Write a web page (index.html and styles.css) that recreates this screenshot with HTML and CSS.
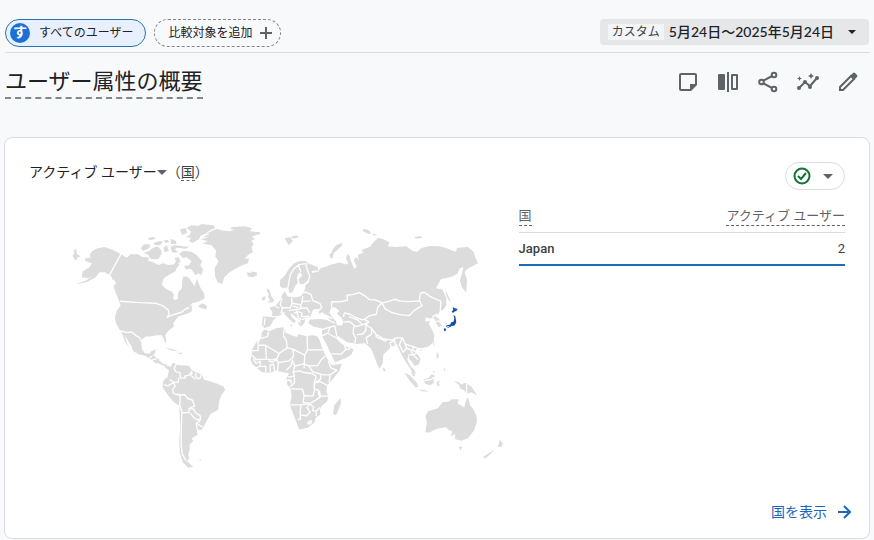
FILE: index.html
```html
<!DOCTYPE html>
<html lang="ja">
<head>
<meta charset="utf-8">
<meta name="viewport" content="width=device-width, initial-scale=1">
<title>ユーザー属性の概要</title>
<link rel="stylesheet" href="styles.css">
</head>
<body>
<header class="topbar">
  <div class="chips">
    <button class="chip chip-selected" type="button"><span class="badge">す</span>すべてのユーザー</button>
    <button class="chip chip-add" type="button">比較対象を追加
      <svg width="14" height="14" viewBox="0 0 14 14" aria-hidden="true"><path d="M7 1v12M1 7h12" stroke="#5f6368" stroke-width="2"/></svg>
    </button>
  </div>
  <button class="date" type="button"><span class="date-tag">カスタム</span><span class="date-range">5月24日～2025年5月24日</span><span class="caret"></span></button>
</header>
<main>
  <div class="title-row">
    <h1>ユーザー属性の概要</h1>
    <div class="tools">
      <button type="button" aria-label="メモ"><svg viewBox="0 0 24 24"><path fill-rule="evenodd" d="M5 3h14a2 2 0 0 1 2 2v10l-6 6H5a2 2 0 0 1-2-2V5a2 2 0 0 1 2-2zm0 2v14h9v-5h5V5z"/></svg></button>
      <button type="button" aria-label="比較"><svg viewBox="0 0 24 24"><path fill-rule="evenodd" d="M3 4h5a1 1 0 0 1 1 1v14a1 1 0 0 1-1 1H3a1 1 0 0 1-1-1V5a1 1 0 0 1 1-1zM11 2h2v20h-2zM16 4h5a1 1 0 0 1 1 1v14a1 1 0 0 1-1 1h-5a1 1 0 0 1-1-1V5a1 1 0 0 1 1-1zm1 2v12h3V6z"/></svg></button>
      <button type="button" aria-label="共有"><svg viewBox="0 0 24 24"><path d="M18 5L5 12l13 7" fill="none" stroke="#5f6368" stroke-width="2"/><g fill="#f8f9fb" stroke="#5f6368" stroke-width="2"><circle cx="18" cy="5" r="2.3"/><circle cx="5.500" cy="12" r="2.300"/><circle cx="18" cy="19" r="2.300"/></g></svg></button>
      <button type="button" aria-label="分析情報"><svg viewBox="0 0 24 24"><path d="M3 18l6-6 5 4 7-8" fill="none" stroke="#5f6368" stroke-width="2"/><circle cx="3" cy="18" r="2"/><circle cx="9" cy="12" r="2"/><circle cx="14" cy="17" r="2"/><circle cx="21" cy="8" r="2"/><path d="M15 3l1 2 2 1-2 1-1 2-1-2-2-1 2-1zM3.500 6l.7 1.800 1.800.7-1.800.7-.7 1.800-.7-1.800L1 8.500l1.800-.7z"/></svg></button>
      <button type="button" aria-label="編集"><svg viewBox="0 0 24 24"><path d="M4 20v-3L15 6l3 3L7 20z" fill="none" stroke="#5f6368" stroke-width="2"/><path d="M14 6l3-3q1-1 2 0l2 2q1 1 0 2l-3 3z"/></svg></button>
    </div>
  </div>
  <section class="card">
    <div class="card-head">
      <h2><button class="metric" type="button">アクティブ ユーザー<span class="caret caret-grey"></span></button><span class="dimension">（<span class="dotted">国</span>）</span></h2>
      <button class="status" type="button" aria-label="データの品質">
        <svg width="20" height="20" viewBox="0 0 20 20"><g fill="none" stroke="#137333" stroke-width="2"><circle cx="10" cy="10" r="7.500"/><path d="M6 10l3 3 5-6"/></g></svg>
        <span class="caret caret-grey"></span>
      </button>
    </div>
    <div class="content">
      <svg class="map" viewBox="0 0 1380 780" role="img" aria-label="国別のアクティブ ユーザー">
        <g class="land">
          <g transform="translate(15 0)">
            <path d="M75 130L92 128 90 118 97 108 112 100 133 96 160 105 182 117 200 128 212 118 235 118 245 125 268 128 264 137 280 142 295 150 310 145 325 150 342 149 350 136 358 150 350 160 346 170 330 178 312 190 305 208 318 222 335 230 342 238 340 252 348 256 354 250 355 232 366 220 367 200 370 184 385 186 395 200 403 213 412 192 420 215 432 235 435 250 418 260 398 264 385 278 378 284 395 279 398 285 385 295 370 300 355 305 345 318 340 325 342 335 325 348 316 360 319 375 317 387 311 370 305 360 285 362 270 365 258 365 247 372 244 388 247 405 255 415 268 417 275 408 288 404 283 418 275 423 280 430 298 432 297 446 285 442 268 430 255 423 235 418 220 408 215 395 200 370 190 352 180 345 168 325 165 308 170 288 182 272 176 255 168 235 161 215 168 205 160 188 148 181 135 172 120 172 105 182 85 190 65 187 68 170 88 157 96 145 76 138zM184 350L193 354 200 382 208 398 196 382zM38 122L43 115 41 105 49 103 51 118 62 124 52 128 50 135 44 134zM47 207L75 198 98 185 118 173 106 188 78 203zM155 182L163 185 162 197 157 193zM414 274L428 265 433 267 442 274 438 284 424 279zM388 275L396 271 395 290 387 294zM242 100L252 88 270 88 269 99 250 108zM252 113L268 108 278 99 292 94 304 105 305 117 295 133 272 132 266 121zM358 116L370 107 395 110 410 120 427 140 421 152 430 162 425 180 415 175 407 181 393 161 378 164 373 154 388 150 395 138 380 127 368 129zM311 98L321 90 327 107 314 112zM331 97L342 91 350 98 345 104 356 111 338 113zM263 70L280 65 287 72 269 76zM282 83L300 78 309 80 301 91 283 90zM310 77L323 74 328 81 318 84zM332 71L348 78 350 87 333 86zM342 90L367 94 388 95 377 101 350 98zM360 43L378 39 382 53 367 60zM344 130L356 126 362 140 352 148zM313 398L337 402 354 409 341 408 321 401zM350 414L368 413 364 418z"/>
          </g>
          <g transform="translate(285 0)">
            <path d="M110 39L124 31 145 33 155 27 190 31 196 39 180 46 170 54 153 62 147 73 129 83 117 78 124 68 107 67 120 60 123 49zM153 73L180 65 158 67 180 56 171 55 200 42 222 47 240 49 253 44 240 41 248 36 285 34 307 40 300 48 312 50 330 51 331 58 318 60 306 65 315 72 304 78 312 87 305 96 309 112 295 119 284 132 298 130 294 145 272 153 252 164 235 176 223 188 217 207 203 202 196 185 194 160 206 140 196 124 199 107 185 91 158 86 173 79zM291 172L302 174 307 170 321 172 321 181 308 187 294 184zM404 70L420 67 430 77 417 91 411 81zM422 66L440 61 448 67 430 71zM0 421L13 423 24 436 20 447 10 440z"/>
          </g>
          <g transform="translate(555 15)">
            <path d="M121 180L136 166 148 146 162 131 180 123 198 123 207 131 235 142 235 152 215 153 218 159 235 155 242 145 259 140 280 132 300 128 319 134 326 130 319 117 323 102 330 108 334 124 344 147 351 140 342 120 350 110 357 121 354 104 372 98 365 90 391 80 399 69 416 53 435 59 450 68 444 79 468 81 500 79 518 92 532 96 545 84 569 78 599 79 622 85 639 92 649 95 652 83 685 81 702 96 707 112 715 130 698 139 687 144 675 156 682 180 680 218 666 201 661 181 668 158 671 141 660 146 654 160 646 166 630 172 604 178 589 205 608 209 620 233 620 255 610 271 601 270 596 284 586 290 599 297 599 307 606 316 597 323 590 310 582 293 571 296 559 292 556 305 572 303 567 312 575 325 584 345 582 366 567 380 545 385 534 383 526 396 535 405 543 418 537 433 525 439 518 427 509 418 506 404 503 420 512 438 523 449 530 463 517 454 499 427 488 409 481 395 471 373 458 367 451 384 431 404 429 430 419 447 411 430 399 397 393 386 376 370 354 372 322 367 306 356 291 346 291 358 308 373 325 383 341 388 336 403 322 413 286 427 273 402 262 377 247 349 247 326 220 320 205 309 212 299 243 297 272 302 260 287 247 277 236 282 240 268 226 267 219 271 212 290 197 294 195 307 185 320 181 301 166 290 151 278 156 292 169 303 162 310 146 295 132 281 116 288 101 300 91 319 73 324 66 314 69 290 96 291 98 276 88 263 105 259 114 250 123 238 127 224 135 214 144 230 163 233 183 229 193 214 198 195 208 186 206 181 190 193 180 192 177 178 188 166 181 156 174 163 171 176 175 188 166 198 158 216 149 221 145 202 129 205 120 199z"/>
            <path class="water" d="M274 264L284 261 299 273 291 281 306 294 311 308 306 317 292 316 287 302 276 290 269 278z"/>
            <path d="M83 205L90 213 94 228 103 240 99 248 83 248 91 240 84 231 87 222 81 214zM68 231L77 229 75 240 66 242zM306 69L290 75 280 86 275 99 269 103 271 113 278 116 282 99 307 77zM370 27L384 29 395 38 386 42 370 34zM398 40L412 44 402 47zM524 51L542 48 548 54 529 56zM617 208L625 225 634 248 627 241 621 228zM174 305L183 310 186 319 179 317zM148 314L158 315 155 321zM430 443L438 449 436 455 430 451zM541 390L547 387 547 393zM580 373L584 362 584 378z"/>
          </g>
          <path transform="translate(555 315)" d="M73 29L89 34 111 24 134 22 138 39 158 47 172 51 175 42 198 48 218 46 233 49 241 64 246 82 256 105 266 123 276 136 306 132 300 151 281 175 262 196 260 215 266 231 262 245 245 259 240 269 242 284 228 294 224 308 205 323 178 330 171 310 162 287 150 255 156 231 152 207 142 193 140 174 148 160 129 157 110 153 91 159 67 157 52 145 38 133 32 119 37 103 36 90 48 69 65 51 65 39zM302 234L304 250 289 286 280 282 283 258z"/>
          <path transform="translate(285 405)" d="M18 25L30 34 45 39 52 48 62 51 69 39 88 46 117 48 126 61 140 67 155 75 163 90 181 94 200 101 221 110 226 120 213 139 208 154 205 180 181 193 171 213 156 240 141 240 143 255 126 265 130 274 119 284 120 297 115 315 118 326 111 334 122 344 130 352 115 353 98 337 90 310 88 277 91 233 88 168 72 157 55 137 38 112 41 91 53 82 57 61 49 55 36 47 24 38zM148 329L156 330 150 334z"/>
          <path transform="translate(1005 375)" d="M0 7L10 0 19 3 18 16 5 20zM44 98L58 105 78 124 87 140 78 143 61 124zM64 93L73 98 76 109 69 108zM88 148L106 151 118 156 95 154zM101 119L117 114 126 103 137 108 131 119 133 128 122 136 106 132zM128 95L136 94 132 100zM141 126L152 122 147 130 152 139 143 137zM141 37L147 42 147 52 141 58zM162 84L168 88 163 96zM192 123L207 127 215 134 226 129 245 140 263 167 246 157 230 162 224 151 213 147 207 134zM107 278L112 248 107 230 115 214 145 205 158 187 178 185 186 178 208 178 203 190 224 203 232 173 236 175 241 196 250 207 261 229 262 246 253 272 235 295 215 303 196 298 196 282 184 291 188 272 181 273 168 262 141 267 119 278zM207 320L218 321 213 332zM331 299L340 312 335 322 325 322zM316 329L304 341 287 356 280 352 298 340z"/>
        </g>
        <g class="borders">
          <path transform="translate(15 0)" d="M183 117L148 182M180 259L240 263 288 265 308 272 325 285 328 298 322 307 345 298 365 292 374 284 386 278M182 347L200 353 215 351 228 362 238 367 246 381M267 431L276 424M275 436L290 432"/>
          <path transform="translate(555 15)" d="M145 202L148 181 152 163 163 146 176 135 190 132 204 132M176 135L183 155M198 135L203 150 210 169 204 188M178 207L195 205M185 219L199 217 214 224 219 242 240 250 246 263 238 270M189 229L187 245 213 243M155 233L157 250 184 255 188 242M127 235L121 253 128 264 124 280 136 279M106 259L119 265M129 263L151 264 157 250M147 272L181 267 184 256M158 258L176 263M182 265L202 264 210 279M162 280L176 275 187 280 184 290 208 289M169 272L177 294 185 300M187 299L201 293M96 290L117 291M76 294L73 316M254 284L277 296M264 299L285 310M275 263L276 245 300 246 323 241 322 226 338 224 359 218 374 227 389 239 407 240 427 249 445 245 464 238 480 243 505 245 539 243 542 220 554 217 573 231 604 244 602 269M427 249L436 266 454 277 480 284 509 287 523 272 547 257 540 243M427 249L414 262 410 283 388 288 374 299 386 305 379 315 395 325 409 343 430 356 456 361 470 354 488 354 497 373 521 380 532 385M311 291L314 279 331 283 347 292 367 300 379 296M311 306L330 305 347 320 369 315 388 307M369 315L354 300 328 290M342 320L340 340 348 355 345 370M351 344L369 343 378 331 379 315M384 372L379 354 396 342 395 325M409 343L410 351 438 364 441 357M455 384L451 368 464 363 466 354M488 354L479 375 490 397 501 385 497 373M501 385L514 391 520 405 530 401M506 405L520 405 536 420M521 380L519 391 529 396M578 291L594 282M588 305L599 303M246 329L270 322 285 318 291 347M247 348L264 340 270 323M264 340L292 355M275 402L304 403 318 389 331 387M318 389L314 374"/>
          <path transform="translate(555 315)" d="M86 36L83 50 60 56 53 72M37 92L55 92 55 76 77 76 118 101 142 84 140 63 131 47 134 22M77 76L80 118 49 119 38 107M40 117L50 131M49 131L61 124 61 139 49 145M61 139L78 140 78 157M80 118L95 120 112 116 118 101M86 123L98 127 110 119 116 128 113 155M91 158L91 136 101 133 105 156M116 128L148 123 161 110 160 88 142 84M160 88L195 106 193 145M202 47L203 90 248 90M203 90L195 106M158 120L154 138 139 151M158 120L165 139 193 132 207 138 233 137 245 119 257 108M165 139L160 157 164 168 152 171 143 171M160 157L180 153 193 158 217 161 229 169 223 190 224 213 219 229 193 227 188 208 153 207M164 168L164 189 151 201M140 182L153 181 154 191M207 138L219 156 242 163 252 165 271 165 291 151 273 144 266 125M242 163L243 177 226 189 241 185 263 197M271 165L268 188M226 189L222 204 239 214 242 228 265 229M193 227L190 248 210 251 229 240 241 232 234 215M150 255L184 255 209 251 222 262 218 272 230 274 240 263M184 255L181 274 182 297 174 300M182 285L200 288 211 277 202 263 208 254M230 274L229 289M204 309L213 302 216 308 208 313z"/>
          <path transform="translate(285 405)" d="M80 43L73 55 77 65 91 69 91 84 107 85 104 79 118 76 126 64M42 104L54 108 71 98 85 97 87 84M59 89L70 96M70 98L76 109 69 117 69 128 78 134 90 134 91 147 89 165 96 184 95 216 94 248 94 286 97 313 109 333M90 137L103 134 114 146 128 151 134 168 118 176 117 188 98 189M118 176L132 178 136 188 151 198 151 211 136 207 120 190M151 211L139 221 142 240M141 221L158 232M127 66L124 77 136 88M139 68L137 78 143 87 151 84 153 75M36 36L45 42M35 47L45 50"/>
          <path transform="translate(1005 375)" d="M104 122L124 119 134 111M231 132L231 162M14 2L18 16"/>
        </g>
        <path class="japan" transform="translate(855 15)" d="M339 261L346 265 354 267 350 273 345 275 340 279 336 275 341 270zM341 285L347 289 350 307 345 317 335 318 331 323 326 318 319 321 320 317 332 314 334 308 342 305 344 294zM314 325L318 326 320 330 315 334 312 330zM323 321L328 321 325 325z"/>
      </svg>
      <div class="data">
        <table>
          <thead><tr><th scope="col"><span>国</span></th><th scope="col"><span>アクティブ ユーザー</span></th></tr></thead>
          <tbody><tr><td>Japan</td><td>2</td></tr></tbody>
        </table>
      </div>
    </div>
    <footer><a href="#countries">国を表示<svg width="16" height="16" viewBox="0 0 16 16" aria-hidden="true"><path d="M2 8h12M8 2l6 6-6 6" fill="none" stroke="#1967b8" stroke-width="2"/></svg></a></footer>
  </section>
</main>
</body>
</html>
```
FILE: styles.css
```css
* { box-sizing: border-box; }
body {
  margin: 0;
  padding: 19px 4px 0;
  background: #f8f9fb;
  color: #202124;
  font: 14px/20px Roboto, "Noto Sans CJK JP", sans-serif;
}
button {
  margin: 0;
  padding: 0;
  border: 0;
  background: none;
  color: inherit;
  font: inherit;
}
h1, h2 { margin: 0; font-weight: 400; }
svg { display: block; }

.topbar {
  display: flex;
  justify-content: space-between;
  align-items: flex-start;
  height: 34px;
  margin-left: 1px;
  border-bottom: 1px solid #dadce0;
}
.chips { display: flex; gap: 8px; }
.chip {
  display: flex;
  align-items: center;
  height: 28px;
  border: 1px solid #2474b5;
  border-radius: 14px;
  font-size: 12px;
}
.chip-selected {
  gap: 9px;
  padding: 0 12px 0 4px;
  background: #e8f0fe;
}
.badge {
  width: 20px;
  height: 20px;
  border-radius: 50%;
  background: #1a6fd8;
  color: #fff;
  font-size: 14px;
  font-weight: 700;
  line-height: 19px;
}
.chip-add {
  gap: 7px;
  padding: 0 7px 0 13px;
  border: 1px dashed #80868b;
}
.date {
  display: flex;
  align-items: center;
  height: 26px;
  margin-right: 1px;
  padding: 0 13px 0 8px;
  border-radius: 4px;
  background: #e6e7e9;
}
.date-tag {
  padding: 0 4px;
  background: #f3f4f5;
  color: #3c4043;
  font-size: 12px;
  line-height: 16px;
}
.date-range {
  margin: 0 14px 0 5px;
  font-family: Lato, "Noto Sans CJK JP", sans-serif;
  font-weight: 500;
}
.caret {
  display: inline-block;
  border: solid transparent;
  border-width: 4px 4px 0;
  border-top-color: #202124;
}
.caret-grey { border-width: 5px 5px 0; border-top-color: #5f6368; }

.title-row {
  display: flex;
  justify-content: space-between;
  align-items: flex-start;
  padding: 14px 10px 0 1px;
}
h1 {
  border-bottom: 2px dashed #80868b;
  font-size: 22px;
  line-height: 30px;
}
.tools { display: flex; gap: 16px; padding-top: 3px; }
.tools svg { width: 24px; height: 24px; fill: #5f6368; }

.card {
  margin-top: 38px;
  padding: 24px 24px 16px;
  border: 1px solid #dadce0;
  border-radius: 8px;
  background: #fff;
}
.card-head { display: flex; justify-content: space-between; }
h2 { display: flex; font-size: 14px; line-height: 20px; }
.metric {
  display: flex;
  align-items: center;
  height: 20px;
}
.dimension { color: #3c4043; }
.dotted { display: inline-block; height: 19px; border-bottom: 1px dashed #5f6368; }
.status {
  display: flex;
  align-items: center;
  gap: 11px;
  height: 28px;
  padding: 0 11px 0 6px;
  border: 1px solid #dadce0;
  border-radius: 14px;
}
.content {
  display: grid;
  grid-template-columns: 3fr 2fr;
  margin-top: 14px;
}
.map { width: calc(100% - 30px); margin: 11px 0 0 26px; }
.land { fill: #dcdcdc; }
.water { fill: #fff; }
.borders { fill: none; stroke: #fff; stroke-width: 4; stroke-linejoin: round; }
.japan { fill: #174ea6; }

table { width: 100%; border-collapse: collapse; }
th {
  height: 28px;
  padding: 0;
  border-bottom: 1px solid #dadce0;
  color: #5f6368;
  font-size: 13px;
  font-weight: 400;
  text-align: left;
  vertical-align: top;
}
th span { display: inline-block; height: 22px; border-bottom: 1px dashed #5f6368; line-height: 24px; }
td {
  height: 33px;
  padding: 1px 0 0;
  border-bottom: 2px solid #1f6bb5;
  color: #3c4043;
  font-size: 13px;
}
td:first-child { font-weight: 500; }
th:last-child, td:last-child { text-align: right; }

footer { display: flex; justify-content: flex-end; margin: 27px -7px 0 0; }
footer a {
  display: flex;
  align-items: center;
  gap: 9px;
  color: #1967b8;
  text-decoration: none;
}
```
